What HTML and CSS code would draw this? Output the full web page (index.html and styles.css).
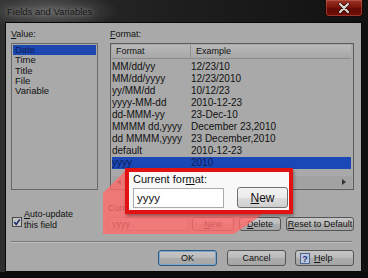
FILE: index.html
```html
<!DOCTYPE html>
<html lang="en">
<head>
    <meta charset="UTF-8">
    <meta name="viewport" content="width=device-width, initial-scale=1.0">
    <title>Fields and Variables</title>
    <link rel="stylesheet" href="styles.css">
</head>
<body class="body">
    <div class="window">
        <div class="titlebar">
            <span class="titlebar__text">Fields and Variables</span>
            <div class="titlebar__close">
                <svg width="14" height="10" viewBox="0 0 14 10">
                    <path d="M3 1 L11 9 M11 1 L3 9" stroke="#3a0a05" stroke-width="3.6" stroke-linecap="round"/>
                    <path d="M3 1 L11 9 M11 1 L3 9" stroke="#e0e0e0" stroke-width="2" stroke-linecap="round"/>
                </svg>
            </div>
        </div>

        <div class="client">
            <div class="panes">
                <div class="pane pane_value">
                    <p class="label"><u>V</u>alue:</p>
                    <ul class="listbox">
                        <li class="listbox__item listbox__item_selected">Date</li>
                        <li class="listbox__item">Time</li>
                        <li class="listbox__item">Title</li>
                        <li class="listbox__item">File</li>
                        <li class="listbox__item">Variable</li>
                    </ul>
                    <div class="auto">
                        <span class="auto__box">
                            <svg width="10" height="10" viewBox="0 0 10 10">
                                <rect x="0.5" y="0.5" width="9" height="9" fill="#c4c4c4" stroke="#4a4a4a"/>
                                <path d="M2.3 5 L4.2 7.4 L7.8 2.4" fill="none" stroke="#1a2a66" stroke-width="1.6"/>
                            </svg>
                        </span>
                        <span class="auto__text"><u>A</u>uto-update<br>this field</span>
                    </div>
                </div>

                <div class="pane pane_format">
                    <p class="label"><u>F</u>ormat:</p>
                    <div class="listview">
                        <div class="listview__head">
                            <span class="listview__col listview__col_first">Format</span>
                            <span class="listview__col">Example</span>
                        </div>
                        <div class="listview__rows">
                            <div class="listview__row"><span class="listview__cell">MM/dd/yy</span><span>12/23/10</span></div>
                            <div class="listview__row"><span class="listview__cell">MM/dd/yyyy</span><span>12/23/2010</span></div>
                            <div class="listview__row"><span class="listview__cell">yy/MM/dd</span><span>10/12/23</span></div>
                            <div class="listview__row"><span class="listview__cell">yyyy-MM-dd</span><span>2010-12-23</span></div>
                            <div class="listview__row"><span class="listview__cell">dd-MMM-yy</span><span>23-Dec-10</span></div>
                            <div class="listview__row"><span class="listview__cell">MMMM dd,yyyy</span><span>December 23,2010</span></div>
                            <div class="listview__row"><span class="listview__cell">dd MMMM,yyyy</span><span>23 December,2010</span></div>
                            <div class="listview__row"><span class="listview__cell">default</span><span>2010-12-23</span></div>
                            <div class="listview__row listview__row_selected"><span class="listview__cell">yyyy</span><span>2010</span></div>
                        </div>
                        <div class="listview__scroll">
                            <svg width="4" height="6" viewBox="0 0 4 6"><path d="M4 0 L0 3 L4 6 Z" fill="#333"/></svg>
                            <svg width="4" height="6" viewBox="0 0 4 6"><path d="M0 0 L4 3 L0 6 Z" fill="#333"/></svg>
                        </div>
                    </div>

                    <div class="current">
                        <p class="label label_current">Current for<u>m</u>at:</p>
                        <div class="current__fields">
                            <div class="textbox">yyyy</div>
                            <button class="button button_new"><u>N</u>ew</button>
                            <button class="button button_delete"><u>D</u>elete</button>
                            <button class="button button_reset"><u>R</u>eset to Default</button>
                        </div>
                    </div>
                </div>
            </div>

            <div class="separator"></div>

            <div class="actions">
                <button class="button button_action button_ok">OK</button>
                <button class="button button_action button_cancel">Cancel</button>
                <button class="button button_action button_help">
                    <svg width="10" height="11" viewBox="0 0 10 11">
                        <rect x="0.5" y="0.5" width="9" height="10" fill="#b9c6dc" stroke="#4d6391"/>
                        <text x="5" y="8.6" text-anchor="middle" font-family="Liberation Sans, sans-serif" font-size="9" font-weight="bold" fill="#1b3580">?</text>
                    </svg>
                    <span><u>H</u>elp</span>
                </button>
            </div>
        </div>
    </div>

    <svg class="spot" width="368" height="278" viewBox="0 0 368 278">
        <polygon points="103,193 126,170 265,170 263,214 234,234 103,234" fill="rgba(255,108,108,0.8)"/>
    </svg>

    <div class="callout">
        <p class="callout__label">Current for<u>m</u>at:</p>
        <div class="callout__fields">
            <div class="callout__input">yyyy</div>
            <button class="callout__button"><u>N</u>ew</button>
        </div>
    </div>
</body>
</html>
```

FILE: styles.css
```css
* {
    margin: 0;
    padding: 0;
    box-sizing: border-box;
}

.body {
    position: relative;
    width: 368px;
    height: 278px;
    overflow: hidden;
    background: #0c0c0c;
    font-family: "Liberation Sans", Arial, sans-serif;
    font-size: 9px;
    color: #111;
}

.window {
    height: 272px;
    padding: 0 6px 0 5px;
    background:
        radial-gradient(ellipse 70px 20px at 48px 11px, #5e5e5e, rgba(60, 60, 60, 0) 100%),
        linear-gradient(to right, #2e2e2e 0, #1f1f1f 45%, #111 100%);
}

.titlebar {
    display: flex;
    justify-content: space-between;
    align-items: flex-start;
    height: 22px;
    margin: 0 -1px 0 2px;
}

.titlebar__text {
    margin-top: 6px;
    font-size: 9.5px;
    line-height: 12px;
    color: #161616;
    text-shadow: 0 0 4px #8c8c8c, 0 0 8px #7a7a7a;
}

.titlebar__close {
    display: flex;
    justify-content: center;
    align-items: center;
    width: 38px;
    height: 17px;
    border: 1px solid #1c0806;
    border-top: none;
    border-radius: 0 0 4px 4px;
    background: linear-gradient(#9a3428, #7c140a 45%, #620a04 55%, #701008);
    box-shadow: inset 0 0 0 1px rgba(255, 150, 130, 0.3);
}

.client {
    display: flex;
    flex-direction: column;
    height: 250px;
    padding: 5px 7px 5px 5px;
    border: 1px solid #080808;
    background: #a9a9a9;
}

.panes {
    display: flex;
    gap: 12px;
}

.pane {
    display: flex;
    flex-direction: column;
}

.pane_value {
    width: 87px;
}

.pane_format {
    flex: 1;
}

.label {
    height: 15px;
    line-height: 12px;
    font-size: 9px;
}

.listbox {
    height: 147px;
    padding: 1px;
    border: 1px solid #686868;
    list-style: none;
}

.listbox__item {
    padding-left: 2px;
    line-height: 10.3px;
    font-size: 9.5px;
}

.listbox__item_selected {
    background: #1c47b0;
    color: #0d1c52;
}

.auto {
    display: flex;
    gap: 2px;
    margin-top: auto;
    margin-left: 1px;
}

.auto__box {
    margin-top: 8px;
    height: 10px;
}

.auto__text {
    line-height: 11px;
    font-size: 9px;
}

.listview {
    display: flex;
    flex-direction: column;
    height: 147px;
    padding: 1px;
    border: 1px solid #5c5c5c;
}

.listview__head {
    display: flex;
    height: 14px;
    margin-right: 1px;
    border-bottom: 1px solid #8c8c8c;
    background: linear-gradient(#b9b9b9, #b0b0b0 50%, #a7a7a7);
    line-height: 13px;
    font-size: 9px;
}

.listview__col {
    padding-left: 5px;
}

.listview__col_first {
    width: 79px;
    padding-left: 4px;
    border-right: 1px solid #939393;
}

.listview__rows {
    flex: 1;
    padding-top: 2px;
    font-size: 10px;
}

.listview__row {
    display: flex;
    height: 12px;
    line-height: 12px;
    margin-right: 1px;
}

.listview__row_selected {
    background: #1a48b6;
    color: #0d1c55;
}

.listview__cell {
    width: 79px;
}

.listview__scroll {
    display: flex;
    justify-content: space-between;
    align-items: center;
    height: 12px;
    padding: 0 6px 0 5px;
    background: #a2a2a2;
}

.current {
    margin-top: 12px;
    margin-left: -2px;
}

.current__fields {
    display: flex;
    height: 14px;
}

.textbox {
    width: 81px;
    padding-left: 3px;
    border: 1px solid #8a8a8a;
    background: #b4b4b4;
    line-height: 12px;
    font-size: 9px;
}

.button {
    height: 14px;
    border: 1px solid #555;
    border-radius: 3px;
    background: linear-gradient(#c6c6c6, #bababa 50%, #acacac 51%, #a6a6a6);
    font-family: "Liberation Sans", Arial, sans-serif;
    font-size: 9px;
    color: #111;
}

.button_new {
    width: 42px;
    margin-left: 3px;
}

.button_delete {
    width: 42px;
    margin-left: 5px;
}

.button_reset {
    width: 68px;
    margin-left: 5px;
}

.separator {
    height: 2px;
    margin: 10px 2px 0 0;
    border-top: 1px solid #7a7a7a;
    border-bottom: 1px solid #bdbdbd;
}

.actions {
    display: flex;
    justify-content: flex-end;
    margin-top: 7px;
}

.button_action {
    width: 59px;
    height: 16px;
}

.button_ok {
    border-color: #2a5b86;
    box-shadow: inset 0 0 0 1px #7fa4c4;
}

.button_cancel {
    margin-left: 10px;
}

.button_help {
    display: flex;
    align-items: center;
    gap: 4px;
    margin-left: 9px;
    padding-left: 4px;
}

.spot {
    position: absolute;
    top: 0;
    left: 0;
    pointer-events: none;
}

.callout {
    position: absolute;
    top: 168px;
    left: 125px;
    width: 168px;
    height: 46px;
    padding: 1px 0 0 4px;
    border: 4px solid #e21212;
    background: #f8f8f8;
    box-shadow: 1px 2px 3px rgba(0, 0, 0, 0.35);
}

.callout__label {
    line-height: 12px;
    font-size: 11px;
    color: #111;
}

.callout__fields {
    display: flex;
    align-items: flex-end;
    gap: 13px;
    margin-top: 2px;
}

.callout__input {
    width: 91px;
    height: 20px;
    padding-left: 3px;
    border: 1px solid #ababab;
    background: #fff;
    line-height: 18px;
    font-size: 11.5px;
}

.callout__button {
    width: 51px;
    height: 21px;
    border: 1px solid #707070;
    border-radius: 3px;
    background: linear-gradient(#f3f3f3, #ebebeb 50%, #dddddd 51%, #cfcfcf);
    font-family: "Liberation Sans", Arial, sans-serif;
    font-size: 12px;
    color: #111;
}
```
